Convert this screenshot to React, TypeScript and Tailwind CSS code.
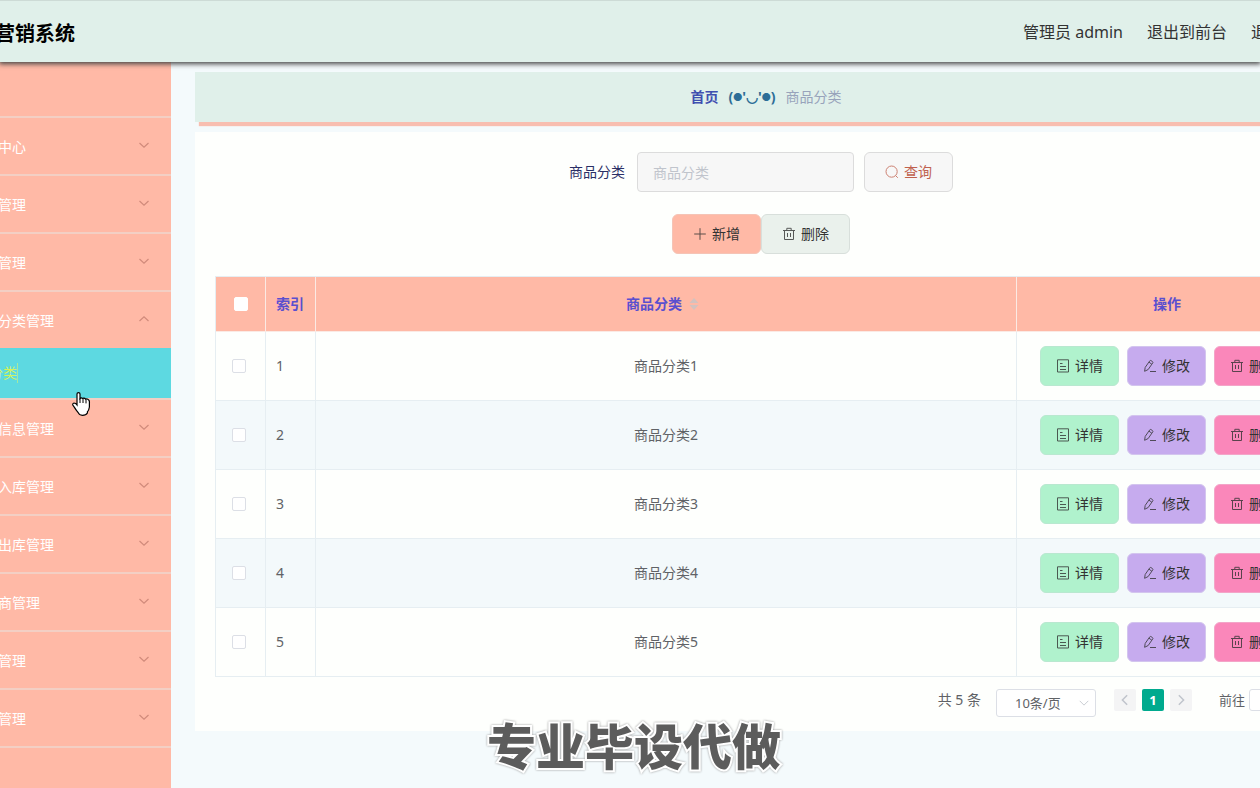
import React from 'react';

type IconProps = { children: React.ReactNode; className?: string };

function Icon({ children, className = 'size-3.5 opacity-80' }: IconProps) {
  return (
    <svg viewBox="0 0 14 14" className={`shrink-0 ${className}`} fill="none" stroke="currentColor" strokeWidth="1" aria-hidden="true">
      {children}
    </svg>
  );
}

const SearchIcon = () => (
  <Icon>
    <circle cx="6.6" cy="6.6" r="5.6" />
    <path d="M10.6 10.6 L12.8 12.8" />
  </Icon>
);

const PlusIcon = () => (
  <Icon>
    <path d="M7 1.2 V12.8 M1.2 7 H12.8" />
  </Icon>
);

const TrashIcon = () => (
  <Icon>
    <path d="M1 3.5 H13 M2.5 3.5 V12.5 H11.5 V3.5 M4.8 3.2 V1.3 H9.2 V3.2 M5.5 6 V10 M8.5 6 V10" />
  </Icon>
);

const DocumentIcon = () => (
  <Icon>
    <path d="M1.5 .8 H12.5 V13 H1.5 Z M4 4.5 H6.5 M4 7.5 H10 M4 10.5 H10" />
  </Icon>
);

const EditIcon = () => (
  <Icon>
    <path d="M1.6 12.3 L2.2 8.4 L6.8 1.8 Q7.3 1.2 8 1.6 L9.6 2.7 Q10.2 3.2 9.8 3.8 L5.2 10.5 Z M6 3.2 L8.8 5.2 M7 12.5 H13" />
  </Icon>
);

const Chevron = ({ up = false }: { up?: boolean }) => (
  <Icon className="size-3.5">
    <path d={up ? 'M2.5 9 L7 4.8 L11.5 9' : 'M2.5 5 L7 9.2 L11.5 5'} strokeWidth="1.2" />
  </Icon>
);

const HandCursor = () => (
  <svg viewBox="0 0 19 24" className="pointer-events-none absolute top-11 left-[72px] z-10 h-6 w-[19px]" aria-hidden="true">
    <path
      d="M5 2 Q5 .6 6.5 .6 Q8 .6 8 2 V6.5 Q9 5.4 10.8 6.4 Q12.4 5.6 13.6 7.2 Q15.4 6.4 17 8.4 Q17.6 9.4 17.4 11 V15 Q17 18 15.4 19.8 V21 Q14 23.3 10.4 23.3 Q7.2 23.2 6.2 20.6 Q4 18 2.6 15.6 L.8 13 Q.4 11.4 2 11 Q3.8 11 5 12.8 Z"
      fill="#fff"
      stroke="#000"
      strokeWidth="1.2"
    />
    <path d="M8 6.5 V11 M11 6.5 V11 M14 7.4 V11.4" stroke="#000" strokeWidth="1" fill="none" />
  </svg>
);

const menuBefore = ['中心', '管理', '管理'];
const menuAfter = ['信息管理', '入库管理', '出库管理', '商管理', '管理', '管理'];
const rows = [1, 2, 3, 4, 5];

function MenuRow({ label, open = false }: { label: string; open?: boolean }) {
  return (
    <li className={open ? 'h-14' : 'h-[58px] border-b-2 border-[#f3cfc4]'}>
      <button type="button" aria-expanded={open} className="flex h-14 w-full items-center justify-between pr-5 text-sm text-white">
        <span className="-ml-0.5 pt-0.5">{label}</span>
        <span className="pb-0.5 text-[#d08a7b]">
          <Chevron up={open} />
        </span>
      </button>
    </li>
  );
}

function Sidebar() {
  return (
    <nav className="w-[171px] shrink-0 overflow-hidden bg-[#ffb9a6]">
      <ul>
        <li className="h-14 border-b-2 border-[#f3cfc4]" />
        {menuBefore.map((label, i) => (
          <MenuRow key={i} label={label} />
        ))}
        <MenuRow label="分类管理" open />
        <li className="relative h-[52px] border-b-2 border-[#f3cfc4]">
          <a href="#category" className="flex h-[50px] items-center bg-[#5dd9e1] text-sm text-[#d3f25c]">
            <span className="-ml-[11px] border-r border-[#a5e9a0]">分类</span>
          </a>
          <HandCursor />
        </li>
        {menuAfter.map((label, i) => (
          <MenuRow key={i} label={label} />
        ))}
      </ul>
    </nav>
  );
}

const rowButton = 'flex h-10 items-center gap-[5px] rounded-md border px-[15px] text-sm whitespace-nowrap text-[#333]';
const formButton = 'flex h-10 items-center gap-[5px] rounded-md border px-5 text-sm whitespace-nowrap';
const cell = 'border-r border-b border-[#e6eef2]';
const checkbox = 'block size-3.5 appearance-none rounded-xs border bg-white';

function CategoryTable() {
  return (
    <table className="w-full table-fixed border-separate border-spacing-0 border-t border-l border-[#e6eef2] text-sm text-[#606266]">
      <colgroup>
        <col className="w-[50px]" />
        <col className="w-[50px]" />
        <col />
        <col className="w-[300px]" />
      </colgroup>
      <thead>
        <tr className="h-[55px] bg-[#ffb9a6] text-[#5a4fcf]">
          <th className="border-r border-b border-[#fbeae4] pl-[18px]">
            <input type="checkbox" aria-label="全选" className={`${checkbox} border-white`} />
          </th>
          <th className="border-r border-b border-[#fbeae4] pl-2.5 text-left font-bold">索引</th>
          <th className="border-r border-b border-[#fbeae4] font-bold">
            <span className="inline-flex items-center">
              商品分类
              <span className="flex w-6 justify-center">
                <svg viewBox="0 0 10 14" className="h-3.5 w-2.5" fill="#d3c2bf" aria-hidden="true">
                  <path d="M0.5 6 L5 1 L9.5 6 Z M0.5 8 L5 13 L9.5 8 Z" />
                </svg>
              </span>
            </span>
          </th>
          <th className="border-b border-[#fbeae4] font-bold">操作</th>
        </tr>
      </thead>
      <tbody>
        {rows.map((n) => (
          <tr key={n} className="h-[69px] even:bg-[#f3f9fb]">
            <td className={`${cell} pl-4`}>
              <input type="checkbox" aria-label={`选择 ${n}`} className={`${checkbox} border-[#dcdfe6]`} />
            </td>
            <td className={`${cell} pl-2.5`}>{n}</td>
            <td className={`${cell} text-center`}>商品分类{n}</td>
            <td className={cell}>
              <div className="flex justify-center gap-2">
                <button type="button" className={`${rowButton} border-[#b9e8d0] bg-[#b0f2cd]`}>
                  <DocumentIcon />
                  详情
                </button>
                <button type="button" className={`${rowButton} border-[#d3c5ee] bg-[#c6abee]`}>
                  <EditIcon />
                  修改
                </button>
                <button type="button" className={`${rowButton} border-[#f3a5c8] bg-[#fa87ba]`}>
                  <TrashIcon />
                  删除
                </button>
              </div>
            </td>
          </tr>
        ))}
      </tbody>
    </table>
  );
}

function Pagination() {
  return (
    <div className="mt-3 flex h-7 items-start justify-end pr-[18px] text-[13px] leading-[22px] text-[#606266]">
      <span className="mr-[15px] text-sm leading-[22px]">共 5 条</span>
      <div className="relative mr-[18px]">
        <select aria-label="每页条数" className="h-7 w-[100px] appearance-none rounded-[3px] border border-[#dcdfe6] bg-white pl-[18px] text-[13px] text-[#606266]">
          <option>10条/页</option>
        </select>
        <span className="pointer-events-none absolute top-2 right-1.5 text-[#c0c4cc]">
          <Icon className="size-3">
            <path d="M2 4.5 L7 9.5 L12 4.5" />
          </Icon>
        </span>
      </div>
      <div className="flex gap-1.5">
        <button type="button" aria-label="上一页" className="flex size-[22px] items-center justify-center rounded-xs bg-[#f4f4f5] text-[#c0c4cc]">
          <Icon className="size-3">
            <path d="M9.5 1.5 L4 7 L9.5 12.5" strokeWidth="1.8" />
          </Icon>
        </button>
        <button type="button" className="flex size-[22px] items-center justify-center rounded-xs bg-[#00aa8e] font-bold text-white">
          1
        </button>
        <button type="button" aria-label="下一页" className="flex size-[22px] items-center justify-center rounded-xs bg-[#f4f4f5] text-[#c0c4cc]">
          <Icon className="size-3">
            <path d="M4.5 1.5 L10 7 L4.5 12.5" strokeWidth="1.8" />
          </Icon>
        </button>
      </div>
      <label className="ml-[27px] flex gap-1">
        前往
        <input type="text" aria-label="页码" className="h-[22px] w-[50px] rounded-[3px] border border-[#dcdfe6] bg-white" />
      </label>
    </div>
  );
}

export default function App() {
  return (
    <div className="relative flex min-h-screen flex-col overflow-hidden bg-[#f4fafc] font-['Noto_Sans','Noto_Sans_CJK_SC',sans-serif]">
      <header className="relative z-10 flex h-[62px] items-center justify-between border-t border-[#cddbd6] bg-[#e0f0ea] shadow-[0_1px_5px_1px_#444]">
        <h1 className="-ml-[5px] pt-1 text-xl font-bold text-black">营销系统</h1>
        <div className="-mr-[55px] flex gap-6 text-base whitespace-nowrap text-[#333]">
          <span>管理员 admin</span>
          <a href="#front">退出到前台</a>
          <a href="#logout">退出登录</a>
        </div>
      </header>

      <div className="flex flex-1">
        <Sidebar />
        <main className="-mr-[77px] ml-6 min-w-0 flex-1 pt-2.5">
          <nav aria-label="breadcrumb" className="flex h-[50px] items-center justify-center gap-2.5 bg-[#e0f0ea] text-sm shadow-[4px_4px_1px_#f8beb0]">
            <a href="#home" className="font-bold text-[#3f4fb0]">首页</a>
            <span className="flex items-center font-bold text-[#2d6d97]">
              (<span className="text-[9px]">●</span>'◡'<span className="text-[9px]">●</span>)
            </span>
            <span className="text-[#98a3bb]">商品分类</span>
          </nav>

          <section className="mt-2.5 bg-[#fefffd] px-5 pt-5 pb-3.5">
            <form className="flex justify-center gap-2.5 pr-2.5">
              <label className="flex items-center gap-3 text-sm text-[#2b2f66]">
                商品分类
                <input
                  type="text"
                  placeholder="商品分类"
                  className="h-10 w-[217px] rounded border border-[#dcdcdc] bg-[#f7f7f7] px-[15px] text-sm placeholder:text-[#c0c4cc]"
                />
              </label>
              <button type="button" className={`${formButton} border-[#dcdcdc] bg-[#f7f7f7] text-[#c0614e]`}>
                <SearchIcon />
                查询
              </button>
            </form>

            <div className="my-[22px] flex justify-center pr-2.5">
              <button type="button" className={`${formButton} border-[#f5c4b6] bg-[#ffb9a6] text-[#333]`}>
                <PlusIcon />
                新增
              </button>
              <button type="button" className={`${formButton} border-[#d8dfdb] bg-[#eaf1ec] text-[#333]`}>
                <TrashIcon />
                删除
              </button>
            </div>

            <CategoryTable />
            <Pagination />
          </section>
        </main>
      </div>

      <p className="pointer-events-none absolute inset-x-0 bottom-1.5 z-20 pl-2 text-center text-[49px] leading-[72px] font-black text-[#5c5c5c] [-webkit-text-stroke:4px_#fff] [paint-order:stroke_fill] [filter:drop-shadow(0_0_1px_#999)]">
        专业毕设代做
      </p>
    </div>
  );
}
